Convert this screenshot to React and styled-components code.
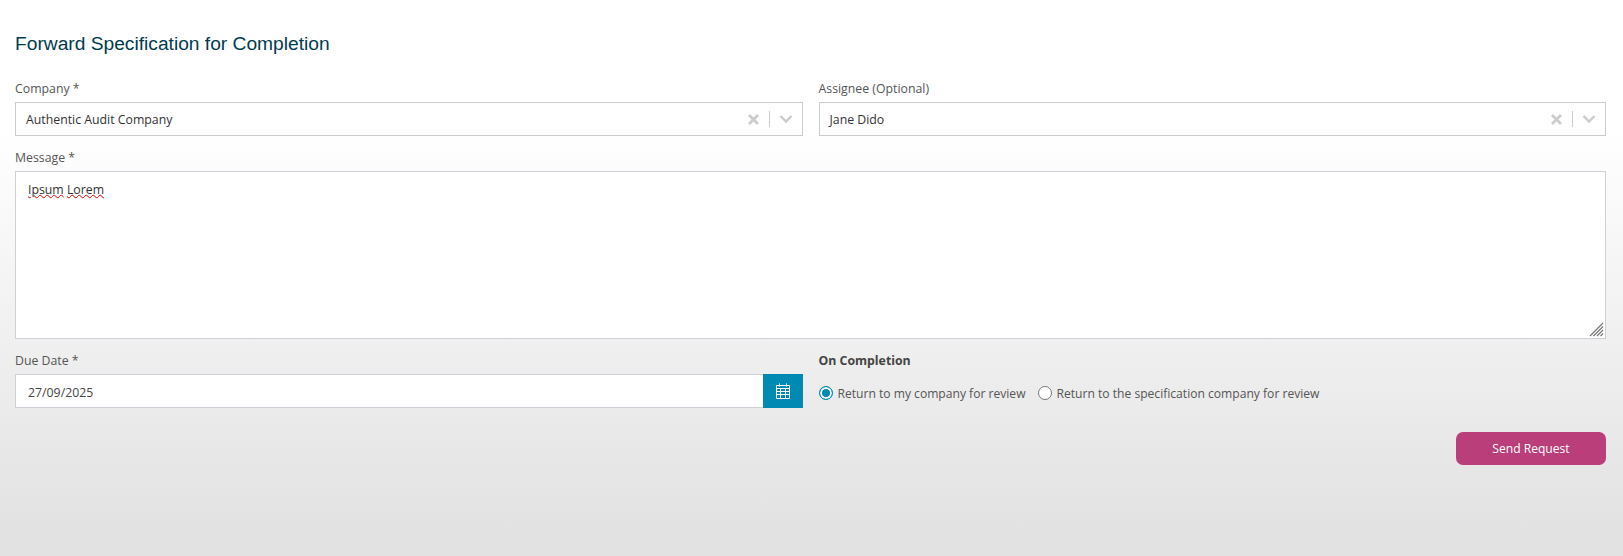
import React from "react";
import styled, { createGlobalStyle } from "styled-components";

const Global = createGlobalStyle`
  html, body { margin: 0; padding: 0; }
  body {
    min-height: 556px;
    background: linear-gradient(to bottom, #ffffff 0, #ffffff 130px, #e2e2e2 530px, #e2e2e2 556px);
    font-family: "Open Sans", "Noto Sans", sans-serif;
    overflow: hidden;
  }
`;
const Page = styled.div`
  padding: 33px 17px 0 15px;
  height: 556px;
  box-sizing: border-box;
`;
const Title = styled.h1`
  margin: 0 0 24px;
  font: 400 19.2px/22px "Liberation Sans", Arial, sans-serif;
  color: #003b4f;
`;
const Row = styled.div`
  display: grid;
  grid-template-columns: 1fr 1fr;
  column-gap: 16px;
`;
const Field = styled.div`
  display: flex;
  flex-direction: column;
  min-width: 0;
`;
const Label = styled.label`
  font-size: 12.3px;
  line-height: 16px;
  height: 21px;
  padding-top: 2px;
  color: #555;
`;
const MessageLabel = styled(Label)`
  margin-top: 12px;
`;
const SelectBox = styled.div`
  box-sizing: border-box;
  height: 34px;
  display: flex;
  align-items: center;
  padding: 0 9px 0 10px;
  background: #fff;
  border: 1px solid #ccc;
  font-size: 12.3px;
  color: #333;
`;
const SelectValue = styled.span`
  flex: 1;
`;
const Sep = styled.span`
  width: 1px;
  height: 16px;
  background: #ccc;
  margin: 0 9px 0 9px;
`;
const Icon = styled.svg`
  display: block;
  flex: none;
`;
const MessageBox = styled.div`
  position: relative;
  box-sizing: border-box;
  height: 168px;
  margin-bottom: 12px;
  padding: 9px 12px;
  background: #fff;
  border: 1px solid #cdd0d6;
  font-size: 12.3px;
  line-height: 18px;
  color: #333;
`;
const Misspelled = styled.span`
  text-decoration: underline wavy #e00000 1.2px;
  text-underline-offset: 0;
`;
const Grip = styled.svg`
  position: absolute;
  right: 1px;
  bottom: 1px;
`;
const DateRow = styled.div`
  display: flex;
  height: 34px;
`;
const DateInput = styled.div`
  box-sizing: border-box;
  flex: 1;
  display: flex;
  align-items: center;
  padding: 2px 0 0 12px;
  background: #fff;
  border: 1px solid #cdd0d6;
  border-right: 0;
  font-size: 12.3px;
  color: #444;
`;
const CalendarButton = styled.button`
  width: 40px;
  border: 0;
  padding: 0;
  background: #0089b3;
  display: flex;
  align-items: center;
  justify-content: center;
`;
const GroupTitle = styled.div`
  font-size: 12.3px;
  font-weight: 700;
  line-height: 16px;
  height: 30px;
  padding-top: 2px;
  color: #444;
`;
const Radios = styled.div`
  display: flex;
  align-items: center;
  height: 20px;
  gap: 12px;
`;
const RadioLabel = styled.span`
  display: flex;
  align-items: center;
  gap: 5px;
  font-size: 12.1px;
  color: #555;
`;
const RadioDot = styled.span`
  box-sizing: border-box;
  width: 14px;
  height: 14px;
  border-radius: 50%;
  background: ${(p) => (p.$on ? "#0089b3" : "#fff")};
  border: 1px solid ${(p) => (p.$on ? "#0089b3" : "#777")};
  box-shadow: ${(p) => (p.$on ? "inset 0 0 0 2px #fff" : "none")};
`;
const Actions = styled.div`
  display: flex;
  justify-content: flex-end;
  margin-top: 24px;
`;
const SendButton = styled.button`
  width: 150px;
  height: 33px;
  border: 0;
  border-radius: 7px;
  background: #b93e7a;
  color: #fff;
  font: 400 12.1px "Open Sans", "Noto Sans", sans-serif;
`;

function Select({ value }) {
  return (
    <SelectBox>
      <SelectValue>{value}</SelectValue>
      <Icon width="13" height="13" viewBox="0 0 13 13">
        <path d="M2 2l9 9M11 2l-9 9" stroke="#ccc" strokeWidth="2.8" fill="none" />
      </Icon>
      <Sep />
      <Icon width="14" height="10" viewBox="0 0 14 10">
        <path d="M1.5 2l5.5 5.5L12.5 2" stroke="#ccc" strokeWidth="2.4" fill="none" />
      </Icon>
    </SelectBox>
  );
}

export default function App() {
  return (
    <Page>
      <Global />
      <Title>Forward Specification for Completion</Title>
      <Row>
        <Field>
          <Label>Company *</Label>
          <Select value="Authentic Audit Company" />
        </Field>
        <Field>
          <Label>Assignee (Optional)</Label>
          <Select value="Jane Dido" />
        </Field>
      </Row>
      <Field>
        <MessageLabel>Message *</MessageLabel>
        <MessageBox>
          <Misspelled>Ipsum</Misspelled> <Misspelled>Lorem</Misspelled>
          <Grip width="15" height="15" viewBox="0 0 15 15">
            <path d="M1 14L14 1M4.5 14L14 4.5M8 14l6-6M11.5 14l2.5-2.5" stroke="#777" strokeWidth="1.2" fill="none" />
          </Grip>
        </MessageBox>
      </Field>
      <Row>
        <Field>
          <Label>Due Date *</Label>
          <DateRow>
            <DateInput>27/09/2025</DateInput>
            <CalendarButton aria-label="Open calendar">
              <Icon width="14" height="16" viewBox="0 0 14 16">
                <path d="M3.5 .5v3M10.5 .5v3" stroke="#fff" strokeWidth="1" fill="none" />
                <path d="M.5 2.5h13v13H.5zM.5 5.5h13M.5 8.5h13M.5 11.5h13M4.5 5.5v10M9.5 5.5v10" stroke="#fff" strokeWidth="1" fill="none" />
              </Icon>
            </CalendarButton>
          </DateRow>
        </Field>
        <Field>
          <GroupTitle>On Completion</GroupTitle>
          <Radios>
            <RadioLabel><RadioDot $on />Return to my company for review</RadioLabel>
            <RadioLabel><RadioDot />Return to the specification company for review</RadioLabel>
          </Radios>
        </Field>
      </Row>
      <Actions>
        <SendButton>Send Request</SendButton>
      </Actions>
    </Page>
  );
}
